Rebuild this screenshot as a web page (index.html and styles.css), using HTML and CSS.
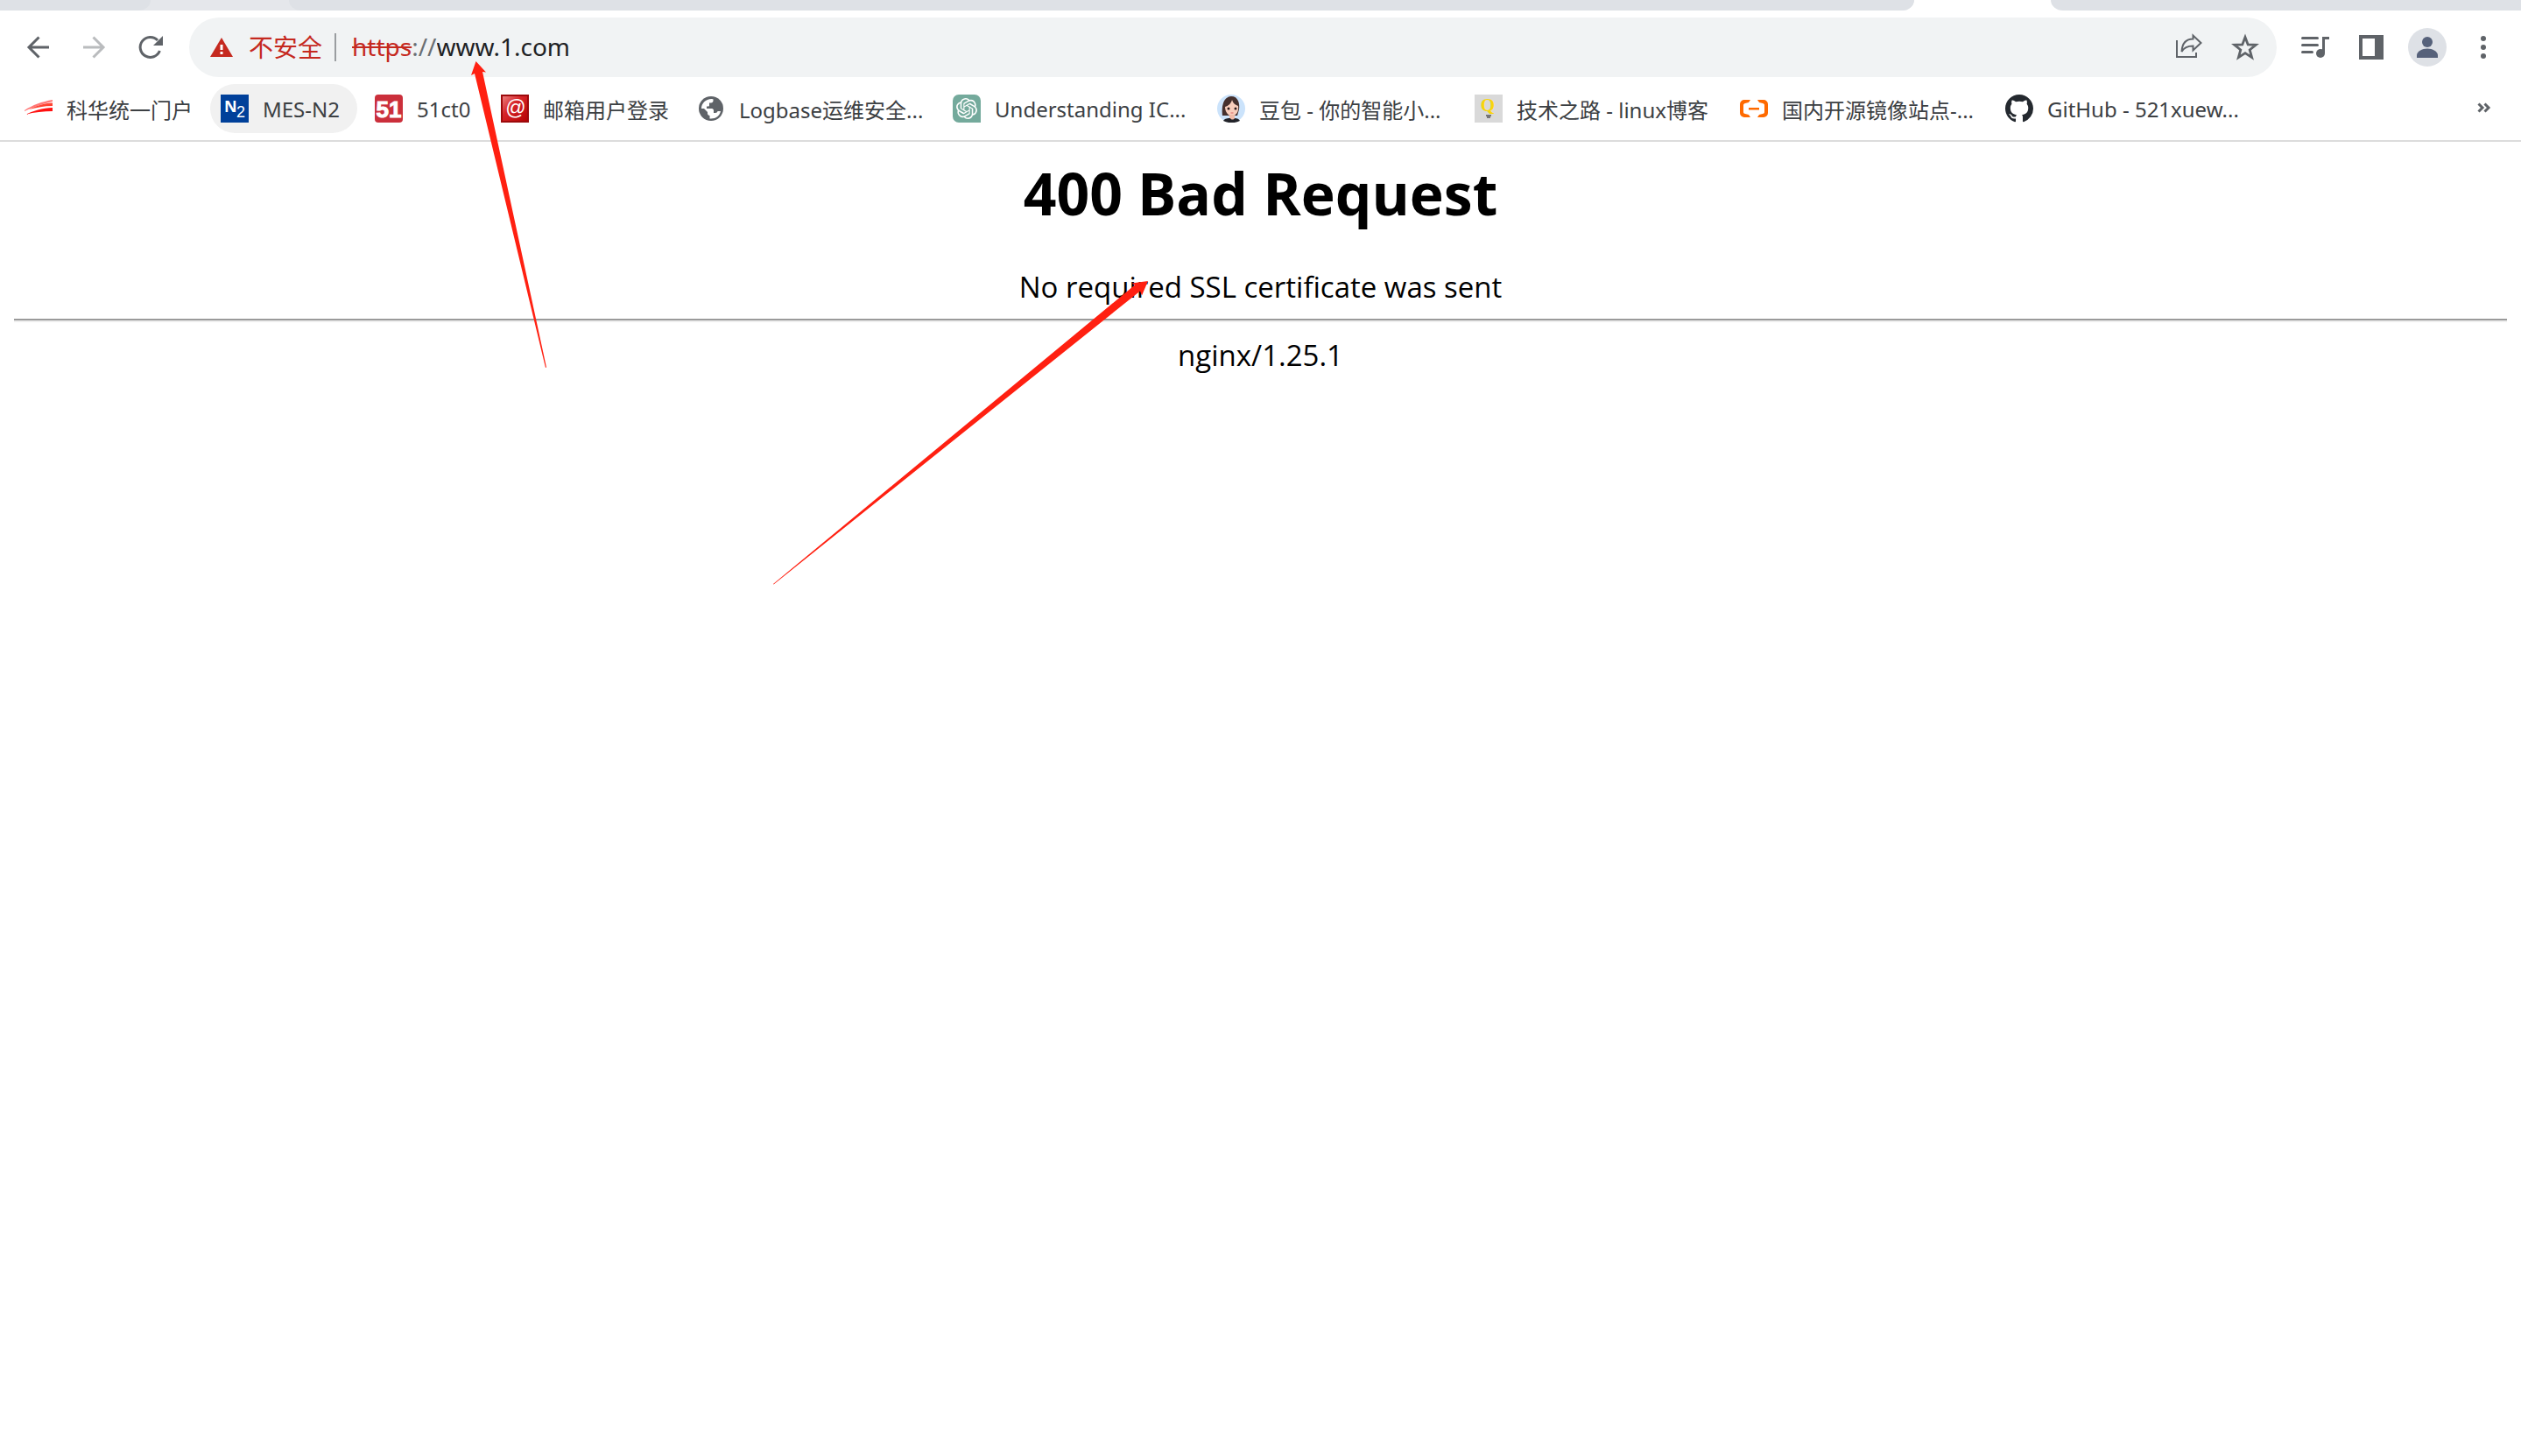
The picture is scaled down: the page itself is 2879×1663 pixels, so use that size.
FILE: index.html
```html
<!DOCTYPE html>
<html lang="zh-CN">
<head>
<meta charset="utf-8">
<title>400 Bad Request</title>
<link rel="stylesheet" href="styles.css">
</head>
<body>
<header class="browser">
  <div class="tabs">
    <div class="tabs-before">
      <div class="tab-first"></div>
      <div class="tab-hover"></div>
      <div class="tab-rest"></div>
    </div>
    <div class="tab-active"></div>
    <div class="tabs-after"></div>
  </div>

  <div class="toolbar">
    <nav class="buttons">
      <button class="tool" aria-label="后退"><svg viewBox="0 0 32 32"><path d="M28 16H6M16.500 4.500L5 16l11.500 11.500" fill="none" stroke="#5f6368" stroke-width="3"/></svg></button>
      <button class="tool" aria-label="前进"><svg viewBox="0 0 32 32"><path d="M3 16h22M14.500 4.500L26 16 14.500 27.500" fill="none" stroke="#babcbe" stroke-width="3"/></svg></button>
      <button class="tool" aria-label="重新加载"><svg viewBox="0 0 32 32"><path d="M26.400 20A11.500 11.500 0 1 1 24 8" fill="none" stroke="#5f6368" stroke-width="3"/><path d="M30 3v11H19z" fill="#5f6368"/></svg></button>
    </nav>
    <div class="omnibox">
      <button class="security"><svg viewBox="0 0 26 22"><path d="M13 0l13 22H0z" fill="#c5291f"/><path d="M11.500 8h3v6h-3zM11.500 16h3v3h-3z" fill="#fff"/></svg><span>不安全</span></button>
      <label class="scheme" for="address"><s>https</s>://</label>
      <input id="address" class="address" type="text" value="www.1.com">
      <button class="tool" aria-label="分享"><svg viewBox="0 0 32 32"><path d="M2 8v19h22v-5" fill="none" stroke="#5f6368" stroke-width="2"/><path d="M7.500 21C8 12 12 6.500 20.500 6.500V2.500L29.500 11l-9 8.500v-5C14 14.500 10 16.500 7.500 21z" fill="none" stroke="#5f6368" stroke-width="2"/></svg></button>
      <button class="tool" aria-label="收藏"><svg viewBox="0 0 32 32"><path d="M16 4.500l3.200 8.400 9 .4-7 5.600 2.400 8.700-7.600-5-7.600 5 2.400-8.700-7-5.600 9-.4z" fill="none" stroke="#5f6368" stroke-width="2.800"/></svg></button>
    </div>
    <nav class="buttons">
      <button class="tool" aria-label="媒体"><svg viewBox="0 0 32 32"><path d="M1.500 5.500h17M1.500 13.500h17M1.500 21.500h11" stroke="#5f6368" stroke-width="3" stroke-linecap="round"/><path d="M32 5.500h-6.500V23" fill="none" stroke="#5f6368" stroke-width="3"/><circle cx="22" cy="23" r="5" fill="#5f6368"/></svg></button>
      <button class="tool" aria-label="侧边栏"><svg viewBox="0 0 32 32"><path d="M2 2h28v28H2zM6 6v20h14V6z" fill="#5f6368" fill-rule="evenodd"/></svg></button>
      <button class="tool profile" aria-label="用户"><svg viewBox="0 0 44 44"><circle cx="22" cy="22" r="22" fill="#dee1e6"/><circle cx="22" cy="16" r="6" fill="#56617a"/><path d="M10 34v-3c0-4 6-7.500 12-7.500S34 27 34 31v3z" fill="#56617a"/></svg></button>
      <button class="tool" aria-label="菜单"><svg viewBox="0 0 32 32" fill="#5f6368"><circle cx="16" cy="6" r="3"/><circle cx="16" cy="16" r="3"/><circle cx="16" cy="26" r="3"/></svg></button>
    </nav>
  </div>

  <nav class="bookmarks">
    <a href="#"><svg viewBox="0 0 32 32"><path d="M0 18C9 12 20 8 32 6v2C20 11 10 14 0 19z" fill="#f77"/><path d="M5 17C13 13 22 10 32 9.500v3.500c-10 0-18 2-27 4z" fill="#f43"/><path d="M1 23c8-4 20-8 31-8v4c-10 0-21 1-31 4z" fill="#f11"/></svg><span>科华统一门户</span></a>
    <a href="#" class="hovered"><svg viewBox="0 0 32 32"><path d="M0 0h32v32H0z" fill="#00409a"/><text x="4" y="20" font-size="18" font-weight="700" fill="#fff">N</text><text x="18" y="26" font-size="18" fill="#fff" class="narrow">2</text></svg><span>MES-N2</span></a>
    <a href="#"><svg viewBox="0 0 32 32"><rect width="32" height="32" rx="4" fill="#cb2f3b"/><text x="16" y="26" font-size="26" font-weight="700" text-anchor="middle" fill="#fff" stroke="#fff" class="narrow">51</text></svg><span>51ct0</span></a>
    <a href="#"><svg viewBox="0 0 32 32"><defs><linearGradient id="mail" x2="1" y2="1"><stop stop-color="#ee8585"/><stop offset=".4" stop-color="#d62529"/><stop offset="1" stop-color="#b40000"/></linearGradient></defs><path d="M1 1h30v30H1z" fill="url(#mail)" stroke="#9d0a0c" stroke-width="2"/><text x="17" y="23" font-size="23" text-anchor="middle" fill="#fff" class="narrow">@</text></svg><span>邮箱用户登录</span></a>
    <a href="#"><svg viewBox="0 0 32 32"><circle cx="16" cy="16" r="14" fill="#5f6368"/><path d="M5 16C5 10 10 5 16.500 5c.8 0 2 .3 2 .3V7c0 1.500-1 2.500-2.500 2.500h-2V12c0 1-.5 1.500-1.500 1.500H11V16h6c1 0 2 1 2 2v3h2c1.300 0 2.300-1 2.500-2H27c-1 5-5.500 8.500-11 8.500-1 0-1.500-.1-1.500-.1V24c-1.500 0-2.500-1-2.500-2.500V20l-4-4z" fill="#fff"/></svg><span>Logbase运维安全...</span></a>
    <a href="#"><svg viewBox="0 0 32 32"><path d="M7 0h18a7 7 0 0 1 7 7v25H7a7 7 0 0 1-7-7V7a7 7 0 0 1 7-7z" fill="#74aa9c"/><path transform="translate(4 4)" fill="#fff" d="M22.282 9.821a5.985 5.985 0 0 0-.516-4.911 6.046 6.046 0 0 0-6.510-2.900A6.065 6.065 0 0 0 4.981 4.182a5.985 5.985 0 0 0-3.998 2.900 6.046 6.046 0 0 0 .743 7.097 5.980 5.980 0 0 0 .511 4.911 6.051 6.051 0 0 0 6.515 2.900A5.985 5.985 0 0 0 13.260 24a6.056 6.056 0 0 0 5.772-4.206 5.989 5.989 0 0 0 3.998-2.900 6.056 6.056 0 0 0-.748-7.073zm-9.022 12.608a4.476 4.476 0 0 1-2.876-1.041l.142-.080 4.778-2.758a.795.795 0 0 0 .393-.681v-6.737l2.020 1.169a.071.071 0 0 1 .038.052v5.583a4.504 4.504 0 0 1-4.495 4.494zm-9.661-4.125a4.471 4.471 0 0 1-.535-3.014l.142.085 4.783 2.758a.771.771 0 0 0 .781 0l5.843-3.369v2.332a.080.080 0 0 1-.033.062L9.740 19.950a4.499 4.499 0 0 1-6.141-1.646zM2.341 7.896a4.485 4.485 0 0 1 2.366-1.973V11.600a.766.766 0 0 0 .388.677l5.814 3.354-2.020 1.169a.076.076 0 0 1-.071 0l-4.830-2.787A4.504 4.504 0 0 1 2.341 7.872zm16.596 3.856L13.104 8.364 15.119 7.200a.076.076 0 0 1 .071 0l4.830 2.791a4.494 4.494 0 0 1-.677 8.104v-5.677a.790.790 0 0 0-.407-.667zm2.011-3.023l-.142-.085-4.774-2.782a.776.776 0 0 0-.785 0L9.409 9.230V6.897a.066.066 0 0 1 .028-.062l4.830-2.787a4.499 4.499 0 0 1 6.680 4.660zM8.307 12.863l-2.020-1.164a.080.080 0 0 1-.038-.057V6.074a4.499 4.499 0 0 1 7.376-3.454l-.142.081L8.704 5.459a.795.795 0 0 0-.393.681zm1.098-2.365l2.602-1.500 2.607 1.500v2.999l-2.597 1.500-2.607-1.500z"/></svg><span>Understanding IC...</span></a>
    <a href="#"><svg viewBox="0 0 32 32"><circle cx="16" cy="16" r="16" fill="#cbe3fb"/><path d="M6 24C5 15 6 3 16 2c8 0 10 8 9 15l-2 7z" fill="#45302d"/><path d="M9 14c4-1 7-4 8-8 1 4 4 6 7 7 1 6-2 11-7 12-5-1-8-6-8-11z" fill="#f8cdbb"/><path d="M14 23h6v6h-6z" fill="#f1bba8"/><path d="M7 30c2-3 5-3 8-3 1 2 4 2 5 0 3 0 5 1 6 3-6 3-13 3-19 0z" fill="#222329"/><circle cx="13" cy="16" r="1.500" fill="#2c1b1b"/><circle cx="21" cy="16" r="1.500" fill="#2c1b1b"/><path d="M15.500 21h3" stroke="#d96767"/></svg><span>豆包 - 你的智能小...</span></a>
    <a href="#"><svg viewBox="0 0 32 32"><path d="M0 0h32v32H0z" fill="#d9d9d9"/><text x="15" y="19" font-size="21" font-weight="700" text-anchor="middle" fill="#f8d50c" class="serif">Q</text><path d="M13 24h6M14 26h4" stroke="#555" stroke-width="1.500"/></svg><span>技术之路 - linux博客</span></a>
    <a href="#"><svg viewBox="0 0 32 32" fill="#ff6a00"><path d="M12 6H5a5 5 0 0 0-5 5v10a5 5 0 0 0 5 5h7l-2-3-4-1c-1 0-2-1-2-2v-8c0-1 1-2 2-2l4-1zM20 6h7a5 5 0 0 1 5 5v10a5 5 0 0 1-5 5h-7l2-3 4-1c1 0 2-1 2-2v-8c0-1-1-2-2-2l-4-1zM10 15h12v2.500H10z"/></svg><span>国内开源镜像站点-...</span></a>
    <a href="#"><svg viewBox="0 0 16 16"><path fill="#24292f" d="M8 0C3.580 0 0 3.580 0 8c0 3.540 2.290 6.530 5.470 7.590.4.070.55-.17.55-.38 0-.19-.01-.82-.01-1.490-2.010.37-2.530-.49-2.690-.94-.09-.23-.48-.94-.82-1.130-.28-.15-.68-.52-.01-.53.63-.01 1.080.58 1.230.82.72 1.210 1.870.87 2.330.66.07-.52.28-.87.51-1.070-1.780-.2-3.640-.89-3.640-3.950 0-.87.31-1.590.82-2.150-.08-.2-.36-1.020.08-2.120 0 0 .67-.21 2.200.82.64-.18 1.320-.27 2-.27s1.360.09 2 .27c1.530-1.040 2.200-.82 2.200-.82.44 1.100.16 1.920.08 2.120.51.56.82 1.270.82 2.150 0 3.070-1.870 3.750-3.650 3.950.29.25.54.73.54 1.480 0 1.070-.01 1.930-.01 2.200 0 .21.15.46.55.38A8.010 8.010 0 0 0 16 8c0-4.420-3.580-8-8-8z"/></svg><span>GitHub - 521xuew...</span></a>
    <button class="tool more" aria-label="更多书签"><svg viewBox="0 0 32 32"><path d="M10.500 10.500L15 15l-4.500 4.500M17.500 10.500L22 15l-4.500 4.500" fill="none" stroke="#5f6368" stroke-width="3"/></svg></button>
  </nav>
</header>

<main class="page">
  <h1>400 Bad Request</h1>
  <p>No required SSL certificate was sent</p>
  <hr>
  <p>nginx/1.25.1</p>
</main>

<svg class="arrows" width="1320" height="680" viewBox="0 0 1320 680" fill="#ff2011" aria-hidden="true">
  <path d="M543.500 70L555 82.500 551 82 624 419.500 623 420 542 84 538 86z"/>
  <path d="M1311 321L1304 337.500 1302 332.500 883.500 667.500 883 667 1296 325.500 1292.500 323.500z"/>
</svg>
</body>
</html>
```
FILE: styles.css
```css
* {
  box-sizing: border-box;
}

body {
  margin: 0;
  background: #fff;
  color: #000;
  font-family: "Noto Sans", "Noto Sans CJK SC", sans-serif;
}

button {
  border: 0;
  padding: 0;
  background: none;
  font: inherit;
}

svg {
  display: block;
  flex: none;
}

/* Tab strip */
.tabs {
  display: flex;
  height: 12px;
}

.tabs-before {
  display: flex;
  flex: 2186 0 0;
  background: #e5e7eb;
  border-bottom-right-radius: 14px 12px;
}

.tab-first {
  width: 172px;
  background: #dee1e6;
  border-bottom-right-radius: 14px 12px;
}

.tab-hover {
  width: 158px;
}

.tab-rest {
  flex: 1;
  background: #dee1e6;
  border-radius: 0 0 14px 14px / 0 0 12px 12px;
}

.tab-active {
  width: 156px;
}

.tabs-after {
  flex: 537 0 0;
  background: #dee1e6;
  border-bottom-left-radius: 14px 12px;
}

/* Toolbar */
.toolbar {
  display: flex;
  align-items: center;
  gap: 16px;
  padding: 8px 15px 8px 16px;
}

.buttons {
  display: flex;
  gap: 8px;
}

.tool {
  display: flex;
  align-items: center;
  justify-content: center;
  flex: none;
  width: 56px;
  height: 56px;
}

.tool svg {
  width: 32px;
  height: 32px;
}

.profile svg {
  width: 44px;
  height: 44px;
}

.omnibox {
  display: flex;
  align-items: center;
  flex: 1;
  gap: 8px;
  height: 68px;
  padding: 0 8px 0 24px;
  border-radius: 34px;
  background: #f1f3f4;
  font-size: 28px;
}

.security {
  display: flex;
  align-items: center;
  gap: 18px;
  height: 32px;
  padding-right: 14px;
  border-right: 2px solid #9a9da0;
  color: #c5291f;
}

.security svg {
  width: 26px;
  height: 22px;
}

.security span,
.scheme,
.address {
  padding: 0 0 2px;
}

.scheme {
  margin-left: 10px;
  color: #6b6f73;
}

.scheme s {
  color: #c5291f;
}

.address {
  flex: 1;
  min-width: 0;
  margin-left: -8px;
  border: 0;
  outline: 0;
  background: none;
  color: #202124;
  font: inherit;
}

/* Bookmarks */
.bookmarks {
  display: grid;
  grid-template-columns: 216px 168px 136px 216px 284px 294px 286px 295px 295px 304px 1fr;
  gap: 8px;
  padding: 0 15px 8px 16px;
  border-bottom: 2px solid #dcdcdc;
  color: #3c4043;
  font-size: 24px;
}

.bookmarks a {
  display: flex;
  align-items: center;
  gap: 16px;
  height: 56px;
  padding-left: 12px;
  border-radius: 28px;
  color: inherit;
  text-decoration: none;
  white-space: nowrap;
}

.bookmarks a svg {
  width: 32px;
  height: 32px;
}

.bookmarks .hovered {
  background: #f1f1f1;
}

.narrow {
  font-family: "Liberation Sans", sans-serif;
}

.serif {
  font-family: "Liberation Serif", serif;
}

.more {
  justify-self: end;
}

/* Error page */
.page {
  padding: 12px 16px 16px;
  font-family: "Open Sans", sans-serif;
  font-size: 33px;
  text-align: center;
}

.page h1 {
  margin: 0 0 38px;
  font-size: 66px;
  line-height: 92px;
}

.page p {
  margin: 0;
  line-height: 48px;
}

.page hr {
  margin: 12px 0 14px;
  border: 0;
  height: 4px;
  border-top: 2px solid #9a9a9a;
  border-bottom: 2px solid #eee;
}

/* Annotation arrows laid over the window */
.arrows {
  position: absolute;
  top: 0;
  left: 0;
  pointer-events: none;
}
```
